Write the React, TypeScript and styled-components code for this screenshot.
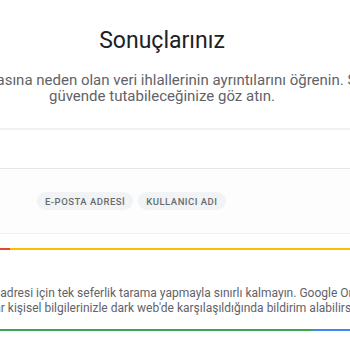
import styled, { createGlobalStyle } from "styled-components";

const GlobalStyle = createGlobalStyle`
  html, body {
    margin: 0;
    padding: 0;
    background: #ffffff;
    overflow: hidden;
  }
  body {
    font-family: Roboto, "Liberation Sans", Arial, sans-serif;
    -webkit-font-smoothing: antialiased;
  }
`;

export default function App() {
  return (
    <>
      <GlobalStyle />
      <Page>
        <Header>
          <Centered>
            <Title>Sonuçlarınız</Title>
            <Subtitle>
              Bilgilerinizin açığa çıkmasına neden olan veri ihlallerinin ayrıntılarını öğrenin. Sonra kendinizi nasıl
              <br />
              güvende tutabileceğinize göz atın.
            </Subtitle>
          </Centered>
        </Header>

        <EmptyBand />

        <ChipBand>
          <Chip>E-POSTA ADRESİ</Chip>
          <Chip>KULLANICI ADI</Chip>
        </ChipBand>

        <Bar>
          <Segment $color="#ea4335" $width={10} />
          <Segment $color="#fbbc04" />
        </Bar>

        <Info>
          <InfoText>
            E-posta adresi için tek seferlik tarama yapmayla sınırlı kalmayın. Google One üyesi olarak izlemeyi açın.
            <br />
            Hesaplar kişisel bilgilerinizle dark web'de karşılaşıldığında bildirim alabilirsiniz.
          </InfoText>
        </Info>

        <Bar>
          <Segment $color="#34a853" />
          <Segment $color="#4285f4" $width={37} />
        </Bar>
      </Page>
    </>
  );
}

// --- Styles ---

const Page = styled.div`
  width: 350px;
  height: 350px;
  overflow: hidden;
  display: flex;
  flex-direction: column;
`;

const Header = styled.header`
  padding-top: 25px;
  height: 128px;
  box-sizing: border-box;
  flex-shrink: 0;
`;

const Centered = styled.div`
  width: 900px;
  margin-left: -288px; /* content centre sits at x=162 */
  text-align: center;
`;

const Title = styled.h1`
  margin: 0;
  font-size: 23px;
  font-weight: 400;
  color: #202124;
  line-height: 32px;
`;

const Subtitle = styled.p`
  margin: 15px 0 0;
  font-size: 15px;
  line-height: 16px;
  color: #5f6368;
  white-space: nowrap;
`;

const EmptyBand = styled.div`
  height: 40px;
  flex-shrink: 0;
  border-top: 2px solid #f1f1f1;
  box-sizing: border-box;
`;

const ChipBand = styled.div`
  height: 66px;
  flex-shrink: 0;
  box-sizing: border-box;
  border-top: 1px solid #e6e6e6;
  border-bottom: 1px solid #f0f0f0;
  background: #fdfdfd;
  display: flex;
  align-items: center;
  gap: 5px;
  padding-left: 37px;
`;

const Chip = styled.span`
  display: inline-flex;
  align-items: center;
  height: 18px;
  padding: 0 8px;
  border-radius: 9px;
  background: #f1f3f4;
  color: #686b70;
  font-size: 9.5px;
  font-weight: 500;
  letter-spacing: 0.5px;
`;

const Bar = styled.div`
  display: flex;
  height: 2px;
  flex-shrink: 0;
  margin-top: 14px;
`;

const Segment = styled.div<{ $color: string; $width?: number }>`
  background: ${(p) => p.$color};
  flex: ${(p) => (p.$width ? `0 0 ${p.$width}px` : "1")};
`;

const Info = styled.div`
  height: 65px;
  flex-shrink: 0;
  box-sizing: border-box;
  padding-top: 36px;
`;

const InfoText = styled.p`
  margin: 0 0 0 -43px;
  font-size: 12px;
  line-height: 15px;
  color: #5f6368;
  white-space: nowrap;
`;
